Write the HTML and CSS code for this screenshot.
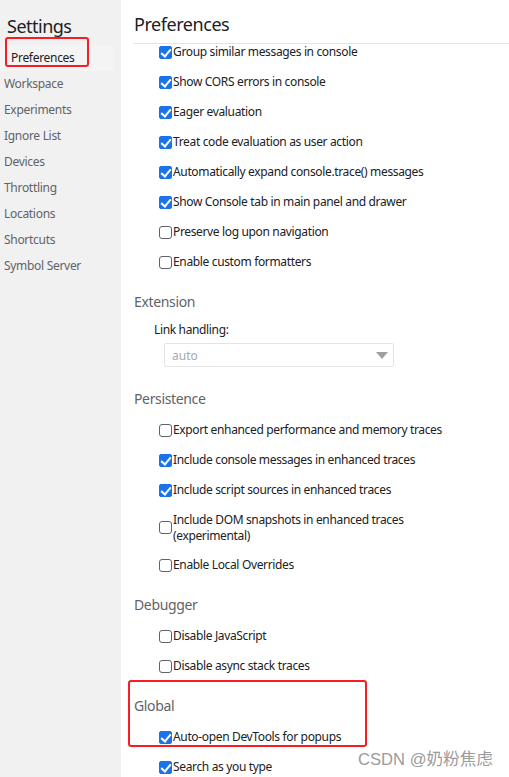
FILE: index.html
```html
<!DOCTYPE html>
<html>
<head>
<meta charset="utf-8">
<link rel="stylesheet" href="styles.css">
</head>
<body>
<div class="app">
  <aside class="sidebar">
    <div class="side-title">Settings</div>
    <nav class="side-nav">
      <div class="side-item selected">Preferences</div>
      <div class="side-item">Workspace</div>
      <div class="side-item">Experiments</div>
      <div class="side-item">Ignore List</div>
      <div class="side-item">Devices</div>
      <div class="side-item">Throttling</div>
      <div class="side-item">Locations</div>
      <div class="side-item">Shortcuts</div>
      <div class="side-item">Symbol Server</div>
    </nav>
    <div class="mark mark-side"></div>
  </aside>
  <main class="main">
    <header class="main-head">Preferences</header>
    <section class="group first">
      <label class="row"><span class="cb on"></span>Group similar messages in console</label>
      <label class="row"><span class="cb on"></span>Show CORS errors in console</label>
      <label class="row"><span class="cb on"></span>Eager evaluation</label>
      <label class="row"><span class="cb on"></span>Treat code evaluation as user action</label>
      <label class="row"><span class="cb on"></span>Automatically expand console.trace() messages</label>
      <label class="row"><span class="cb on"></span>Show Console tab in main panel and drawer</label>
      <label class="row"><span class="cb"></span>Preserve log upon navigation</label>
      <label class="row"><span class="cb"></span>Enable custom formatters</label>
    </section>
    <section class="group">
      <h2 class="sec-title">Extension</h2>
      <div class="field-label">Link handling:</div>
      <div class="select"><span>auto</span><span class="arrow"></span></div>
    </section>
    <section class="group">
      <h2 class="sec-title">Persistence</h2>
      <label class="row"><span class="cb"></span>Export enhanced performance and memory traces</label>
      <label class="row"><span class="cb on"></span>Include console messages in enhanced traces</label>
      <label class="row"><span class="cb on"></span>Include script sources in enhanced traces</label>
      <label class="row two"><span class="cb"></span><span>Include DOM snapshots in enhanced traces<br>(experimental)</span></label>
      <label class="row"><span class="cb"></span>Enable Local Overrides</label>
    </section>
    <section class="group">
      <h2 class="sec-title">Debugger</h2>
      <label class="row"><span class="cb"></span>Disable JavaScript</label>
      <label class="row"><span class="cb"></span>Disable async stack traces</label>
    </section>
    <section class="group">
      <h2 class="sec-title">Global</h2>
      <label class="row"><span class="cb on"></span>Auto-open DevTools for popups</label>
      <label class="row"><span class="cb on"></span>Search as you type</label>
    </section>
    <div class="mark mark-global"></div>
  </main>
  <div class="watermark">CSDN @奶粉焦虑</div>
</div>
</body>
</html>
```

FILE: styles.css
```css
* { box-sizing: border-box; }
html, body {
  margin: 0;
  padding: 0;
  width: 509px;
  height: 777px;
  overflow: hidden;
  background: #fff;
  font-family: "Noto Sans", "Open Sans", sans-serif;
  color: #202124;
}
.app {
  position: relative;
  display: flex;
  height: 777px;
}
.sidebar {
  position: relative;
  width: 121px;
  flex: none;
  background: #f1f1f1;
}
.side-title {
  height: 45px;
  padding: 14px 0 0 7px;
  font-size: 18px;
  line-height: 24px;
  letter-spacing: -0.5px;
  color: #202124;
}
.side-nav {
  display: flex;
  flex-direction: column;
}
.side-item {
  height: 26px;
  line-height: 26px;
  padding-left: 4px;
  font-size: 12px;
  letter-spacing: -0.3px;
  color: #5f6368;
  margin-right: 8px;
}
.side-item.selected {
  padding-left: 11px;
  color: #202124;
  background: #f4f4f4;
}
.main {
  position: relative;
  flex: 1;
  padding-left: 13px;
}
.main-head {
  height: 44px;
  border-bottom: 1px solid #dee3ed;
  padding-top: 12px;
  font-size: 18px;
  line-height: 24px;
  letter-spacing: -0.45px;
  color: #202124;
}
.group {
  display: flex;
  flex-direction: column;
  gap: 14px;
  padding-top: 22px;
}
.group.first { padding-top: 0; }
.sec-title {
  margin: 0 0 -1px;
  font-weight: normal;
  font-size: 14px;
  line-height: 20px;
  letter-spacing: -0.35px;
  color: #5f6368;
}
.row {
  display: flex;
  align-items: center;
  height: 16px;
  padding-left: 25px;
  font-size: 12px;
  line-height: 16px;
  letter-spacing: -0.35px;
  color: #202124;
}
.row.two { height: 31px; }
.cb {
  flex: none;
  width: 13px;
  height: 13px;
  margin-right: 1px;
  border: 1px solid #5f6368;
  border-radius: 3px;
  background: #fff;
  position: relative;
}
.cb.on {
  border-color: #1a73e8;
  background: #1a73e8;
  border-radius: 2px;
}
.cb.on::after {
  content: "";
  position: absolute;
  left: 3px;
  top: 0px;
  width: 4px;
  height: 8px;
  border: solid #fff;
  border-width: 0 2px 2px 0;
  transform: rotate(40deg);
}
.field-label {
  margin-top: -3px;
  padding-left: 20px;
  font-size: 12px;
  line-height: 16px;
  letter-spacing: -0.35px;
  color: #202124;
}
.select {
  margin: -9px 0 0 30px;
  width: 230px;
  height: 24px;
  border: 1px solid #e3e3e3;
  border-radius: 2px;
  display: flex;
  align-items: center;
  justify-content: space-between;
  padding: 0 5px 0 7px;
  font-size: 12px;
  color: #a8a8a8;
}
.arrow {
  width: 0;
  height: 0;
  border-left: 6px solid transparent;
  border-right: 6px solid transparent;
  border-top: 7px solid #a0a0a0;
}
.mark {
  position: absolute;
  border: 2px solid #f81d25;
  border-radius: 3px;
}
.mark-side {
  left: 5px;
  top: 37px;
  width: 84px;
  height: 30px;
}
.mark-global {
  left: 7px;
  top: 680px;
  width: 239px;
  height: 67px;
}
.watermark {
  position: absolute;
  left: 358px;
  top: 749px;
  font-family: "Liberation Sans", "Noto Sans CJK SC", sans-serif;
  font-size: 16.6px;
  line-height: 22px;
  color: #9b9b9b;
  white-space: nowrap;
}
```
